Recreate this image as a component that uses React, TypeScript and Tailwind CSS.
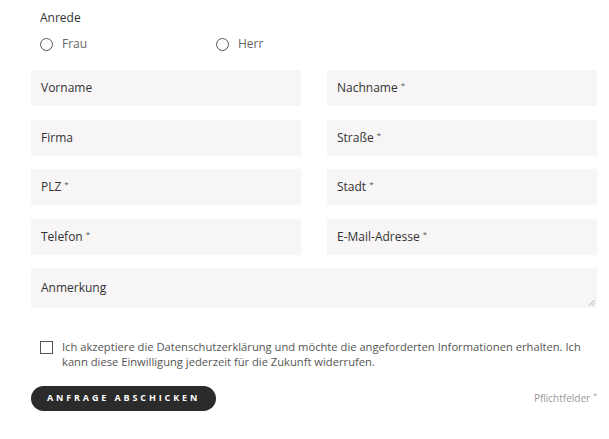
import React from "react";

const font = { fontFamily: '"Open Sans", "Noto Sans", sans-serif' };

function Star() {
  return <span className="text-[8px] align-top ml-[3px] text-[#555]">*</span>;
}

function Field({ label, req }: { label: string; req?: boolean }) {
  return (
    <div className="h-[36px] bg-[#f7f5f5] flex items-center pl-[10px] text-[12px] text-[#333]">
      <span>
        {label}
        {req && <Star />}
      </span>
    </div>
  );
}

function Radio({ label }: { label: string }) {
  return (
    <div className="flex items-center gap-[9px] w-[176px]">
      <span className="w-[13px] h-[13px] rounded-full border border-[#555] bg-white" />
      <span className="text-[12px] text-[#666]">{label}</span>
    </div>
  );
}

export default function App() {
  return (
    <div className="w-[609px] h-[439px] bg-white pl-[31px] pr-[12px] pt-[9px]" style={font}>
      <div className="pl-[9px] text-[12px] text-[#333] leading-[18px]">Anrede</div>
      <div className="flex pl-[9px] mt-[8px] h-[18px] items-center">
        <Radio label="Frau" />
        <Radio label="Herr" />
      </div>
      <div className="grid grid-cols-2 gap-x-[26px] gap-y-[13.5px] mt-[17px]">
        <Field label="Vorname" />
        <Field label="Nachname" req />
        <Field label="Firma" />
        <Field label="Straße" req />
        <Field label="PLZ" req />
        <Field label="Stadt" req />
        <Field label="Telefon" req />
        <Field label="E-Mail-Adresse" req />
      </div>
      <div className="relative mt-[13px] h-[40px] bg-[#f7f5f5] pl-[10px] pt-[12px] text-[12px] text-[#333] leading-[16px]">
        Anmerkung
        <svg className="absolute right-[2px] bottom-[2px]" width="7" height="7" viewBox="0 0 7 7">
          <line x1="6.5" y1="1" x2="1" y2="6.5" stroke="#999" strokeWidth="0.8" />
          <line x1="6.5" y1="4" x2="4" y2="6.5" stroke="#999" strokeWidth="0.8" />
        </svg>
      </div>
      <div className="flex items-start mt-[31px] pl-[9px]">
        <span className="w-[13px] h-[13px] border border-[#555] bg-white mt-[2px] shrink-0" />
        <p className="ml-[9px] text-[11.2px] leading-[15px] text-[#555]">
          Ich akzeptiere die Datenschutzerklärung und möchte die angeforderten Informationen erhalten. Ich kann diese Einwilligung jederzeit für die Zukunft widerrufen.
        </p>
      </div>
      <div className="flex items-center justify-between mt-[17px]">
        <button className="h-[25px] w-[185px] rounded-full bg-[#2b2b2b] text-white text-[9px] font-bold tracking-[0.32em] flex items-center justify-center">
          ANFRAGE ABSCHICKEN
        </button>
        <span className="text-[10px] text-[#999]">
          Pflichtfelder<span className="text-[7px] align-top ml-[3px]">*</span>
        </span>
      </div>
    </div>
  );
}
